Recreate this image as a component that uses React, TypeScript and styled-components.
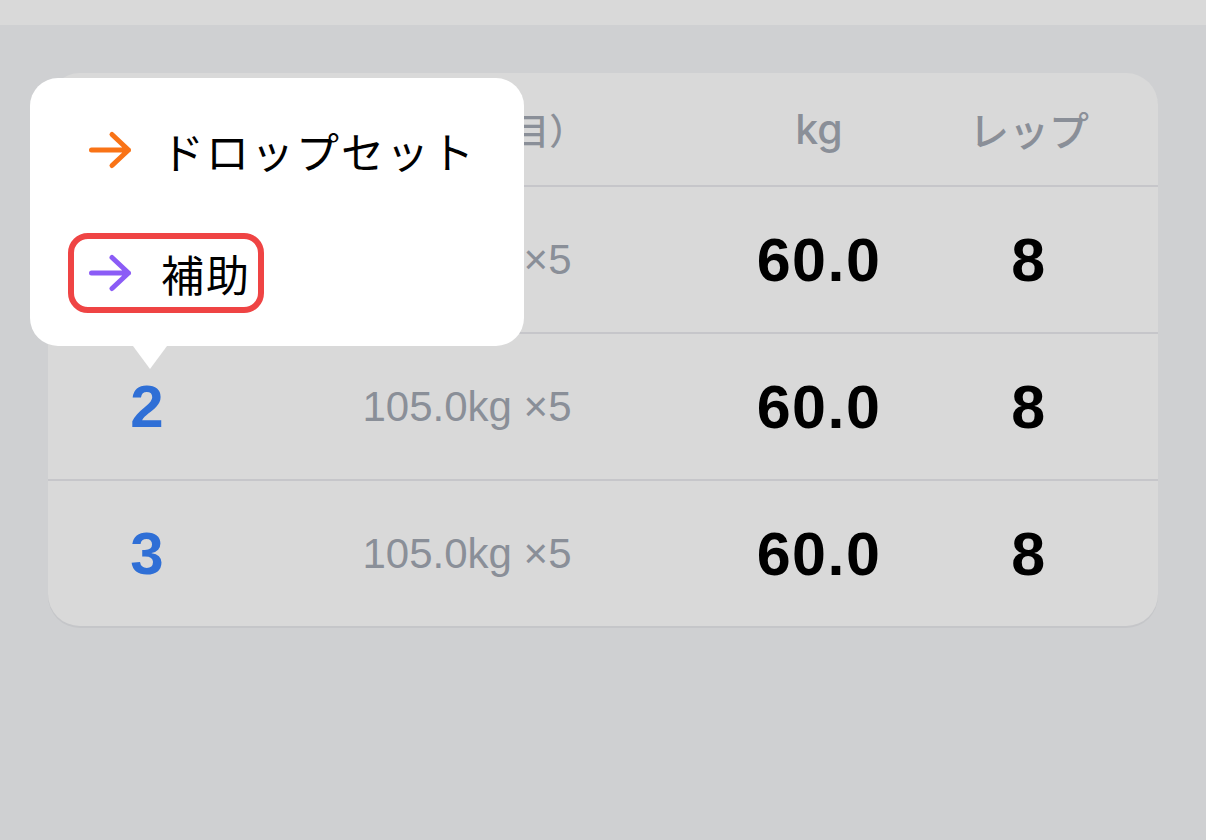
import React from "react";
import styled, { createGlobalStyle } from "styled-components";

const Global = createGlobalStyle`
  html, body { margin: 0; padding: 0; }
  body {
    background: #cfd0d2;
    font-family: "Liberation Sans", Arial, sans-serif;
    -webkit-font-smoothing: antialiased;
  }
`;

const Page = styled.div`
  position: relative;
  width: 1206px;
  height: 840px;
  background: #cfd0d2;
  overflow: hidden;
`;

const TopBar = styled.div`
  height: 25px;
  background: #d9d9d9;
`;

const Content = styled.div`
  padding: 48px 48px 0;
`;

const Card = styled.div`
  background: #d9d9d9;
  border-radius: 32px;
  box-shadow: 0 2px 0 #c5c6c9;
  overflow: hidden;
`;

const Row = styled.div<{ $header?: boolean }>`
  display: grid;
  grid-template-columns: 198px 442px 262px 158px;
  padding-right: 50px;
  align-items: center;
  height: ${(p) => (p.$header ? "112px" : "145px")};
  border-top: ${(p) => (p.$header ? "none" : "2px solid #c6c6ca")};
`;

const Cell = styled.div`
  display: flex;
  justify-content: center;
  align-items: center;
  white-space: nowrap;
`;

const HeadLatin = styled(Cell)`
  font-family: Inter, "Liberation Sans", sans-serif;
  font-weight: 500;
  font-size: 41px;
  color: #8a8f98;
`;

const HeadJa = styled(Cell)<{ $size: number }>`
  font-family: "Noto Sans CJK JP", sans-serif;
  font-weight: 500;
  font-size: ${(p) => p.$size}px;
  color: #8a8f98;
`;

const SetNum = styled(Cell)`
  font-weight: 700;
  font-size: 60px;
  color: #2f6fd6;
`;

const Prev = styled(Cell)`
  font-size: 42px;
  color: #8a8f98;
`;

const Value = styled(Cell)`
  font-weight: 700;
  font-size: 61px;
  letter-spacing: 1.5px;
  color: #000;
`;

const Popover = styled.div`
  position: absolute;
  left: 30px;
  top: 78px;
  width: 494px;
  height: 268px;
  box-sizing: border-box;
  background: #fff;
  border-radius: 28px;
  padding: 32px 38px 0;
  display: flex;
  flex-direction: column;
  gap: 43px;

  &::after {
    content: "";
    position: absolute;
    left: 103px;
    bottom: -23px;
    width: 0;
    height: 0;
    border-left: 17px solid transparent;
    border-right: 17px solid transparent;
    border-top: 23px solid #fff;
  }
`;

const MenuItem = styled.div<{ $selected?: boolean }>`
  display: flex;
  align-items: center;
  gap: 28px;
  width: fit-content;
  height: 80px;
  box-sizing: border-box;
  padding: 0 7px 0 13px;
  border: 6px solid ${(p) => (p.$selected ? "#ef4444" : "transparent")};
  border-radius: 20px;
  white-space: nowrap;
`;

const MenuLabel = styled.span`
  font-family: "Noto Sans CJK JP", sans-serif;
  font-size: 43px;
  letter-spacing: 2px;
  color: #000;
  line-height: 1;
  white-space: nowrap;
`;

const Arrow = ({ color }: { color: string }) => (
  <svg width="46" height="40" viewBox="0 0 46 40" fill="none">
    <path
      d="M4.5 20H41.5M25 4.5L41.5 20L25 35.5"
      stroke={color}
      strokeWidth="5"
      strokeLinecap="round"
      strokeLinejoin="round"
    />
  </svg>
);

const rows = [1, 2, 3];

export default function App() {
  return (
    <Page>
      <Global />
      <TopBar />
      <Content>
        <Card>
          <Row $header>
            <HeadJa $size={36}>セット</HeadJa>
            <HeadJa $size={36}>前回（1回目）</HeadJa>
            <HeadLatin>kg</HeadLatin>
            <HeadJa $size={40}>レップ</HeadJa>
          </Row>
          {rows.map((n) => (
            <Row key={n}>
              <SetNum>{n}</SetNum>
              <Prev>105.0kg ×5</Prev>
              <Value>60.0</Value>
              <Value>8</Value>
            </Row>
          ))}
        </Card>
      </Content>
      <Popover>
        <MenuItem>
          <Arrow color="#f97316" />
          <MenuLabel>ドロップセット</MenuLabel>
        </MenuItem>
        <MenuItem $selected>
          <Arrow color="#8b5cf6" />
          <MenuLabel>補助</MenuLabel>
        </MenuItem>
      </Popover>
    </Page>
  );
}
